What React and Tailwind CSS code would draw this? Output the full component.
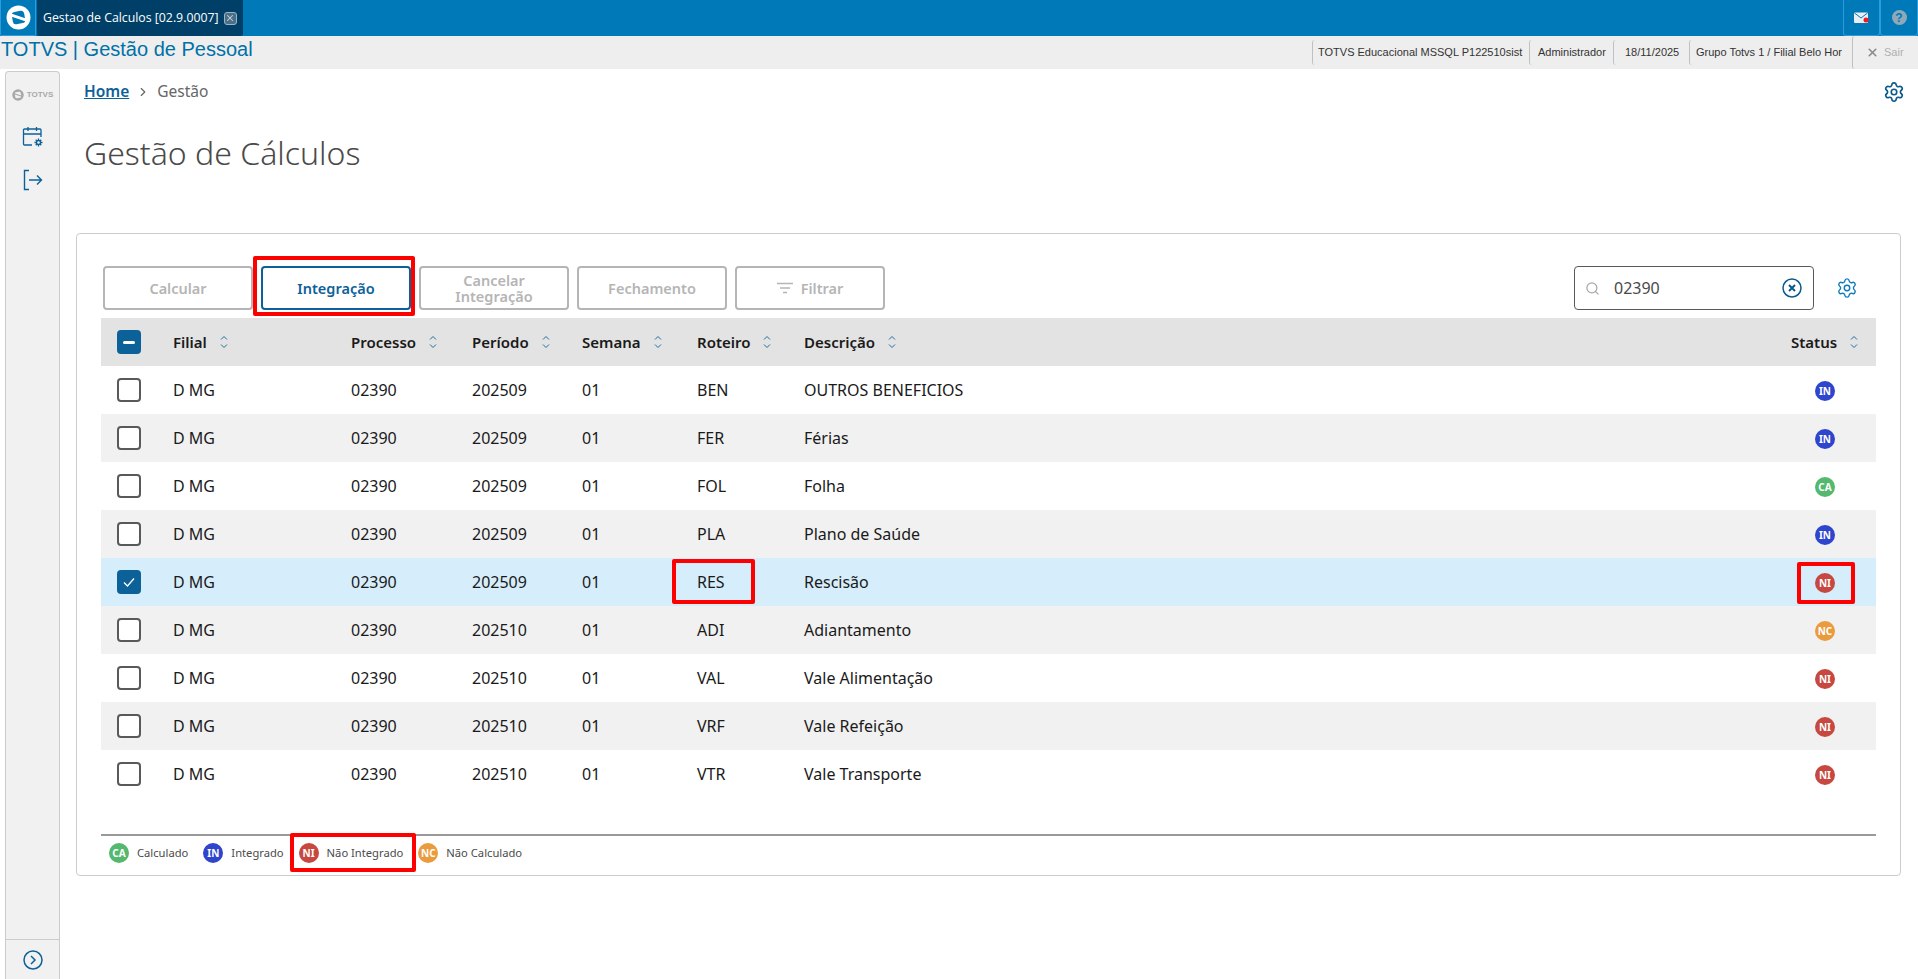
import React from 'react';
import { Settings, Search, X, ChevronRight } from 'lucide-react';

const ROWS = [
  { periodo: '202509', roteiro: 'BEN', descricao: 'OUTROS BENEFICIOS', status: 'IN' },
  { periodo: '202509', roteiro: 'FER', descricao: 'Férias', status: 'IN' },
  { periodo: '202509', roteiro: 'FOL', descricao: 'Folha', status: 'CA' },
  { periodo: '202509', roteiro: 'PLA', descricao: 'Plano de Saúde', status: 'IN' },
  { periodo: '202509', roteiro: 'RES', descricao: 'Rescisão', status: 'NI', selected: true },
  { periodo: '202510', roteiro: 'ADI', descricao: 'Adiantamento', status: 'NC' },
  { periodo: '202510', roteiro: 'VAL', descricao: 'Vale Alimentação', status: 'NI' },
  { periodo: '202510', roteiro: 'VRF', descricao: 'Vale Refeição', status: 'NI' },
  { periodo: '202510', roteiro: 'VTR', descricao: 'Vale Transporte', status: 'NI' },
];

const BADGE = {
  CA: 'bg-[#55b86f]',
  IN: 'bg-[#2f45cc]',
  NI: 'bg-[#c64840]',
  NC: 'bg-[#ea9b3e]',
};

const COLS = 'grid grid-cols-[72px_178px_121px_110px_115px_107px_1fr_85px]';

function RedBox({ className }) {
  return <span className={`absolute border-4 border-[#ff0000] rounded-[2px] pointer-events-none ${className}`} />;
}

function Badge({ code }) {
  return (
    <span className={`flex h-5 w-5 items-center justify-center rounded-full text-[10px] font-bold leading-none text-white ${BADGE[code]}`}>
      {code}
    </span>
  );
}

function SortIcon() {
  return (
    <svg width="8" height="14" viewBox="0 0 8 14" fill="none" stroke="#1b6f9f" strokeWidth="1" className="ml-[13px]">
      <path d="M1 4.5 4 1.5l3 3M1 9.5l3 3 3-3" />
    </svg>
  );
}

function Checkbox({ state }) {
  if (state === 'none') {
    return <span className="block h-6 w-6 rounded-[4px] border-2 border-[#58595a] bg-white" />;
  }
  return (
    <span className="flex h-6 w-6 items-center justify-center rounded-[4px] bg-[#0c6199]">
      {state === 'checked' ? (
        <svg width="14" height="14" viewBox="0 0 14 14" fill="none" stroke="#fff" strokeWidth="1.3">
          <path d="M2 7.5 5.5 11 12 3.5" />
        </svg>
      ) : (
        <span className="block h-[3px] w-3 rounded-sm bg-white" />
      )}
    </span>
  );
}

function ToolButton({ children, active, highlight }) {
  return (
    <button
      className={`relative flex h-11 w-[150px] items-center justify-center rounded-[4px] border-2 bg-white px-4 text-center text-[14.5px] font-semibold leading-[16px] ${
        active ? 'border-[#0c6199] text-[#0c6199]' : 'border-[#b5b5b5] text-[#b5b5b5]'
      }`}
    >
      {children}
      {highlight && <RedBox className="-left-[10px] -right-[6px] -top-[12px] -bottom-[8px]" />}
    </button>
  );
}

function TotvsMark({ size, color, bg }) {
  return (
    <svg width={size} height={size} viewBox="0 0 24 24">
      <circle cx="12" cy="12" r="11.500" fill={color} />
      <rect x="6" y="6" width="12" height="12" rx="3" fill={bg} transform="rotate(-10 12 12)" />
      <path d="M4.500 9.500 19.500 14.500" stroke={color} strokeWidth="2.600" />
    </svg>
  );
}

function TopBar() {
  return (
    <div className="flex h-9 shrink-0 items-stretch bg-[#0079b8]">
      <div className="flex w-9 items-center justify-center rounded-b-[2px] border border-t-0 border-[#2c9be0] bg-[#0079b8]">
        <TotvsMark size={25} color="#ffffff" bg="#0079b8" />
      </div>
      <div className="ml-px flex w-[206px] items-center rounded-b-[2px] bg-[#003f67] pl-[6px] font-['Open_Sans',sans-serif] text-[12.3px] text-white">
        <span className="whitespace-nowrap">Gestao de Calculos [02.9.0007]</span>
        <span className="ml-[5px] flex h-[13px] w-[13px] items-center justify-center rounded-[3px] border border-[#9fb4c2] bg-[#4a6f88]">
          <X size={10} strokeWidth={2.5} color="#c8d4dc" />
        </span>
      </div>
      <div className="flex-1" />
      <div className="flex w-[37px] items-center justify-center rounded-b-[3px] border border-t-0 border-[#2c9be0]">
        <svg width="16" height="12" viewBox="0 0 16 12">
          <rect x="0" y="0.500" width="14" height="10.500" rx="1" fill="#e8eef2" />
          <path d="M0.500 1 7 6l6.500-5" fill="none" stroke="#0079b8" strokeWidth="1" />
          <circle cx="12" cy="8" r="2.500" fill="#ea1c24" />
        </svg>
      </div>
      <div className="flex w-[38px] items-center justify-center rounded-b-[3px] border border-t-0 border-[#2c9be0]">
        <span className="flex h-[15px] w-[15px] items-center justify-center rounded-full bg-[#8fa9b9] font-['Liberation_Sans',sans-serif] text-[12px] font-bold text-[#0079b8]">?</span>
      </div>
    </div>
  );
}

function SubBar() {
  const items = [
    { label: 'TOTVS Educacional MSSQL P122510sist', w: 'w-[217px] pl-[5px]' },
    { label: 'Administrador', w: 'w-[84px] pl-[8px]' },
    { label: '18/11/2025', w: 'w-[76px] pl-[11px]' },
    { label: 'Grupo Totvs 1 / Filial Belo Hor', w: 'w-[163px] pl-[6px]' },
  ];
  return (
    <div className="flex h-[33px] shrink-0 items-center bg-[#eeeeee] font-['Liberation_Sans',sans-serif]">
      <span className="pb-[8px] pl-px text-[20px] text-[#0071a8]">TOTVS | Gestão de Pessoal</span>
      <div className="flex-1" />
      {items.map((item) => (
        <span key={item.label} className={`flex h-[25px] items-center whitespace-nowrap rounded-l-[3px] border-l border-[#c0c0c0] text-[11px] text-[#333333] ${item.w}`}>
          {item.label}
        </span>
      ))}
      <span className="flex h-[33px] w-[66px] items-center rounded-l-[3px] border-l border-[#c0c0c0] pl-[13px] text-[11px] text-[#b0b0b0]">
        <X size={13} strokeWidth={3} color="#8a8a8a" className="mr-[5px]" />
        Sair
      </span>
    </div>
  );
}

function Sidebar() {
  return (
    <aside className="ml-[5px] mt-[2px] flex w-[55px] shrink-0 flex-col items-center rounded-t-[4px] border border-b-0 border-[#cccccc] bg-[#f1f1f1]">
      <div className="mt-[17px] flex items-center gap-[3px] text-[#a8a8a8]">
        <TotvsMark size={12} color="#a8a8a8" bg="#f1f1f1" />
        <span className="font-['Liberation_Sans',sans-serif] text-[8px] font-bold leading-none">TOTVS</span>
      </div>
      <svg className="mt-[25px]" width="22" height="22" viewBox="0 0 22 22" fill="none" stroke="#0c6199" strokeWidth="1.300">
        <path d="M10 19H2.500a1 1 0 0 1-1-1V4a1 1 0 0 1 1-1H18a1 1 0 0 1 1 1v7M1.500 8H19M6 1v4M14.500 1v4" />
        <circle cx="16.500" cy="16.500" r="2" />
        <path d="M16.500 12.500v2M16.500 18.500v2M12.500 16.500h2M18.500 16.500h2M13.700 13.700l1.400 1.400M17.900 17.900l1.400 1.400M19.300 13.700l-1.400 1.400M15.100 17.900l-1.400 1.400" />
      </svg>
      <svg className="mt-[21px]" width="20" height="22" viewBox="0 0 20 22" fill="none" stroke="#0c6199" strokeWidth="1.400">
        <path d="M6 1.500H1.500v19H6M6 11h12.500M14 6.500l4.500 4.500-4.500 4.500" />
      </svg>
      <div className="mt-auto flex h-10 w-full items-center justify-center border-t border-[#cccccc]">
        <svg width="20" height="20" viewBox="0 0 20 20" fill="none" stroke="#0c6199" strokeWidth="1.500">
          <circle cx="10" cy="10" r="9" />
          <path d="M8 6l4 4-4 4" />
        </svg>
      </div>
    </aside>
  );
}

function HeaderCell({ label }) {
  return (
    <div className="flex items-center text-[15px] font-semibold text-[#1a1a1a]">
      {label}
      <SortIcon />
    </div>
  );
}

function LegendItem({ code, label, highlight }) {
  return (
    <div className="relative flex items-center">
      <Badge code={code} />
      <span className="ml-2 text-[11.2px] text-[#4a4a4a]">{label}</span>
      {highlight && <RedBox className="-left-[9px] -right-[13px] -top-[10px] -bottom-[9px]" />}
    </div>
  );
}

export default function App() {
  return (
    <div className="flex h-screen w-full flex-col overflow-hidden bg-white font-['Noto_Sans',sans-serif]">
      <TopBar />
      <SubBar />
      <div className="flex min-h-0 flex-1">
        <Sidebar />
        <main className="flex min-w-0 flex-1 flex-col">
          <div className="flex items-center pl-6 pr-[13px] pt-[11px]">
            <a className="text-[15.5px] font-semibold text-[#0c6199] underline">Home</a>
            <ChevronRight size={14} color="#666" className="mx-[7px]" />
            <span className="text-[15.5px] text-[#666666]">Gestão</span>
            <Settings size={22} strokeWidth={1.8} color="#0c5a8a" className="ml-auto" />
          </div>
          <h1 className="pl-6 pt-[28px] text-[32px] font-light leading-[44px] text-[#4a4a4a]">Gestão de Cálculos</h1>

          <section className="ml-4 mr-[17px] mt-[58px] h-[643px] rounded-[4px] border border-[#cccccc] pl-6 pr-6 pt-8">
            <div className="ml-[2px] flex items-center gap-2">
              <ToolButton>Calcular</ToolButton>
              <ToolButton active highlight>Integração</ToolButton>
              <ToolButton>
                <span>Cancelar<br />Integração</span>
              </ToolButton>
              <ToolButton>Fechamento</ToolButton>
              <ToolButton>
                <svg width="16" height="12" viewBox="0 0 16 12" fill="none" stroke="#b5b5b5" strokeWidth="1.500" className="mr-2">
                  <path d="M0 1.500h16M3 6h10M6 10.500h4" />
                </svg>
                Filtrar
              </ToolButton>
              <div className="ml-auto flex h-11 w-[240px] items-center rounded-[4px] border border-[#58595a] pl-[10px] pr-[11px]">
                <Search size={15} color="#a8a8a8" />
                <span className="ml-[14px] text-[16px] text-[#4a4a4a]">02390</span>
                <svg className="ml-auto" width="20" height="20" viewBox="0 0 20 20" fill="none" stroke="#0c5a8a" strokeWidth="1.500">
                  <circle cx="10" cy="10" r="9" />
                  <path d="M7 7l6 6M13 7l-6 6" strokeWidth="2" />
                </svg>
              </div>
              <Settings size={22} strokeWidth={1.5} color="#0c7ab8" className="ml-[14px] mr-[18px]" />
            </div>

            <div className={`${COLS} mt-2 h-12 items-center bg-[#e3e3e3]`}>
              <div className="pl-4"><Checkbox state="mixed" /></div>
              <HeaderCell label="Filial" />
              <HeaderCell label="Processo" />
              <HeaderCell label="Período" />
              <HeaderCell label="Semana" />
              <HeaderCell label="Roteiro" />
              <HeaderCell label="Descrição" />
              <HeaderCell label="Status" />
            </div>

            {ROWS.map((row, i) => (
              <div
                key={row.roteiro}
                className={`${COLS} relative h-12 items-center text-[16px] text-[#1a1a1a] ${
                  row.selected ? 'bg-[#d6eefb]' : i % 2 === 1 ? 'bg-[#f1f1f1]' : 'bg-white'
                }`}
              >
                <div className="pl-4"><Checkbox state={row.selected ? 'checked' : 'none'} /></div>
                <div>D MG</div>
                <div>02390</div>
                <div>{row.periodo}</div>
                <div>01</div>
                <div className="relative">
                  {row.roteiro}
                  {row.selected && <RedBox className="-left-[25px] -top-[11px] h-[45px] w-[83px]" />}
                </div>
                <div>{row.descricao}</div>
                <div className="relative pl-6 pt-px">
                  <Badge code={row.status} />
                  {row.selected && <RedBox className="left-[6px] -top-[10px] h-[42px] w-[58px]" />}
                </div>
              </div>
            ))}

            <div className="mt-[36px] flex h-[36px] items-center gap-[15px] border-t-2 border-[#999999] pl-2">
              <LegendItem code="CA" label="Calculado" />
              <LegendItem code="IN" label="Integrado" />
              <LegendItem code="NI" label="Não Integrado" highlight />
              <LegendItem code="NC" label="Não Calculado" />
            </div>
          </section>
        </main>
      </div>
    </div>
  );
}
